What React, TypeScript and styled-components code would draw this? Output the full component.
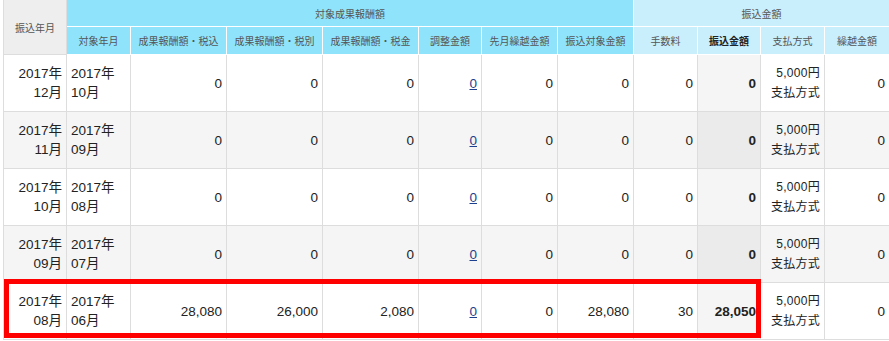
import React from 'react';
import styled, { createGlobalStyle } from 'styled-components';

const GlobalStyle = createGlobalStyle`
  html, body {
    margin: 0;
    padding: 0;
    background: #fff;
  }
  body {
    font-family: "Liberation Sans", "Noto Sans CJK JP", sans-serif;
    color: #222;
  }
`;

const Wrapper = styled.div`
  position: relative;
  padding-left: 3px;
  width: 886px;
`;

const Table = styled.table`
  border-collapse: collapse;
  table-layout: fixed;
  width: 886px;
  border-left: 1px solid #ddd;
`;

type Tone = 'base' | 'target' | 'transfer';

const headBg: Record<Tone, string> = {
  base: '#eeeeee',
  target: '#8fe4fc',
  transfer: '#c9eefc',
};

const Th = styled.th<{ $tone: Tone; $strong?: boolean; $tall?: boolean }>`
  background: ${({ $tone }) => headBg[$tone]};
  border: 1px solid ${({ $tone }) => ($tone === 'base' ? '#ddd' : '#fff')};
  border-top: none;
  font-size: 10px;
  font-weight: ${({ $strong }) => ($strong ? 700 : 400)};
  color: ${({ $strong }) => ($strong ? '#222' : '#555')};
  height: ${({ $tall }) => ($tall ? '27px' : '26px')};
  padding: 0 2px;
  text-align: center;
  vertical-align: middle;
  white-space: nowrap;
`;

const Tr = styled.tr<{ $striped: boolean }>`
  background: ${({ $striped }) => ($striped ? '#f5f5f5' : '#fff')};
`;

const Td = styled.td<{ $align?: 'left' | 'right'; $strong?: boolean; $striped?: boolean }>`
  border: 1px solid #ddd;
  height: 56px;
  padding: 0 4px;
  font-size: 13.5px;
  line-height: 19px;
  text-align: ${({ $align }) => $align ?? 'right'};
  vertical-align: middle;
  font-weight: ${({ $strong }) => ($strong ? 700 : 400)};
  background: ${({ $strong, $striped }) =>
    $strong ? ($striped ? '#ebebeb' : '#f5f5f5') : 'transparent'};
`;

const Method = styled.span`
  font-size: 12px;
  letter-spacing: 0.3px;
`;

const AdjustLink = styled.a`
  color: #1d3f8f;
  text-decoration: underline;
`;

const Highlight = styled.div`
  position: absolute;
  left: 4px;
  top: 279px;
  width: 757px;
  height: 59px;
  box-sizing: border-box;
  border: 5px solid #ff0000;
  pointer-events: none;
`;

type Row = {
  paid: [string, string];
  target: [string, string];
  withTax: string;
  noTax: string;
  tax: string;
  adjust: string;
  carried: string;
  subject: string;
  fee: string;
  transfer: string;
  rest: string;
};

const rows: Row[] = [
  { paid: ['2017年', '12月'], target: ['2017年', '10月'], withTax: '0', noTax: '0', tax: '0', adjust: '0', carried: '0', subject: '0', fee: '0', transfer: '0', rest: '0' },
  { paid: ['2017年', '11月'], target: ['2017年', '09月'], withTax: '0', noTax: '0', tax: '0', adjust: '0', carried: '0', subject: '0', fee: '0', transfer: '0', rest: '0' },
  { paid: ['2017年', '10月'], target: ['2017年', '08月'], withTax: '0', noTax: '0', tax: '0', adjust: '0', carried: '0', subject: '0', fee: '0', transfer: '0', rest: '0' },
  { paid: ['2017年', '09月'], target: ['2017年', '07月'], withTax: '0', noTax: '0', tax: '0', adjust: '0', carried: '0', subject: '0', fee: '0', transfer: '0', rest: '0' },
  { paid: ['2017年', '08月'], target: ['2017年', '06月'], withTax: '28,080', noTax: '26,000', tax: '2,080', adjust: '0', carried: '0', subject: '28,080', fee: '30', transfer: '28,050', rest: '0' },
];

const widths = [63, 64, 96, 96, 96, 63, 76, 76, 64, 63, 64, 65];

export default function App() {
  return (
    <>
      <GlobalStyle />
      <Wrapper>
        <Table>
          <colgroup>
            {widths.map((w, i) => (
              <col key={i} style={{ width: w }} />
            ))}
          </colgroup>
          <thead>
            <tr>
              <Th $tone="base" rowSpan={2}>振込年月</Th>
              <Th $tone="target" colSpan={7}>対象成果報酬額</Th>
              <Th $tone="transfer" colSpan={4}>振込金額</Th>
            </tr>
            <tr>
              <Th $tone="target" $tall>対象年月</Th>
              <Th $tone="target" $tall>成果報酬額・税込</Th>
              <Th $tone="target" $tall>成果報酬額・税別</Th>
              <Th $tone="target" $tall>成果報酬額・税金</Th>
              <Th $tone="target" $tall>調整金額</Th>
              <Th $tone="target" $tall>先月繰越金額</Th>
              <Th $tone="target" $tall>振込対象金額</Th>
              <Th $tone="transfer" $tall>手数料</Th>
              <Th $tone="transfer" $tall $strong>振込金額</Th>
              <Th $tone="transfer" $tall>支払方式</Th>
              <Th $tone="transfer" $tall>繰越金額</Th>
            </tr>
          </thead>
          <tbody>
            {rows.map((r, i) => {
              const striped = i % 2 === 1;
              return (
                <Tr key={i} $striped={striped}>
                  <Td>
                    {r.paid[0]}
                    <br />
                    {r.paid[1]}
                  </Td>
                  <Td $align="left">
                    {r.target[0]}
                    <br />
                    {r.target[1]}
                  </Td>
                  <Td>{r.withTax}</Td>
                  <Td>{r.noTax}</Td>
                  <Td>{r.tax}</Td>
                  <Td>
                    <AdjustLink href="#">{r.adjust}</AdjustLink>
                  </Td>
                  <Td>{r.carried}</Td>
                  <Td>{r.subject}</Td>
                  <Td>{r.fee}</Td>
                  <Td $strong $striped={striped}>{r.transfer}</Td>
                  <Td>
                    <Method>
                      5,000円
                      <br />
                      支払方式
                    </Method>
                  </Td>
                  <Td>{r.rest}</Td>
                </Tr>
              );
            })}
          </tbody>
        </Table>
        <Highlight />
      </Wrapper>
    </>
  );
}
